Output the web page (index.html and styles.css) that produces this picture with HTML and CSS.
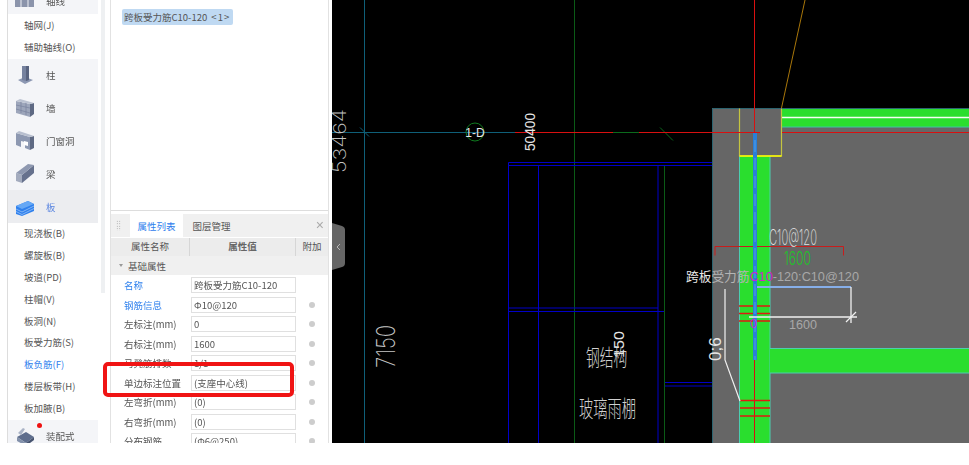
FILE: index.html
```html
<!DOCTYPE html>
<html lang="zh-CN">
<head>
<meta charset="utf-8">
<title>钢筋属性</title>
<link rel="stylesheet" href="styles.css">
</head>
<body>
<div class="app">
  <nav class="sidebar">
    <div class="cat cat-top">
      <svg class="ico" viewBox="0 0 20 20"><path d="M0 2h19v17H0z" fill="#8b94ab" transform="translate(0 -6)"/><path d="M6 -4v17M13 -4v17M0 4h19" stroke="#eef0f5" fill="none"/></svg>
      <span>轴线</span>
    </div>
    <div class="subs subs-first">
      <div class="sub">轴网(J)</div>
      <div class="sub">辅助轴线(O)</div>
    </div>
    <div class="cat">
      <svg class="ico" viewBox="0 0 20 20"><path d="M3 15l7-3 8 3-8 4z" fill="#8c97b2"/><path d="M7 1h7v14l-3 1-4-1z" fill="#76829f"/><path d="M11 1h3v14l-3 1z" fill="#58637f"/></svg>
      <span>柱</span>
    </div>
    <div class="cat">
      <svg class="ico" viewBox="0 0 20 20"><path d="M1 3l14 3v13L1 15z" fill="#9da6bb"/><path d="M15 6l4-1v11l-4 3z" fill="#5e6983"/><path d="M1 3l4-2 14 4-4 1z" fill="#bcc3d2"/><path d="M1 7l14 3M1 11l14 4M6 4v11M11 5v12" stroke="#78839d" stroke-width=".7" fill="none"/></svg>
      <span>墙</span>
    </div>
    <div class="cat">
      <svg class="ico" viewBox="0 0 20 20"><path d="M1 2l14 4v13l-5-2V11L6 10v6l-5-2z" fill="#8d98b1"/><path d="M15 6l4-1v12l-4 2z" fill="#5e6983"/><path d="M1 2l3-2 15 5-4 1z" fill="#b8bfcf"/><path d="M9 10l4 1v4l-4-1z" fill="#fff"/></svg>
      <span>门窗洞</span>
    </div>
    <div class="cat">
      <svg class="ico" viewBox="0 0 20 20"><path d="M1 9l6 2v8l-6-2z" fill="#a3abbe"/><path d="M7 11L19 1v8L7 19z" fill="#66718d"/><path d="M1 9L13 0l6 1L7 11z" fill="#8e98b0"/></svg>
      <span>梁</span>
    </div>
    <div class="cat cat-on">
      <svg class="ico" viewBox="0 0 20 20"><path d="M1 9l12-5 6 3v7L7 19l-6-2z" fill="#2f80ed"/><path d="M1 9l12-5 6 3L7 12z" fill="#66a8f5"/><path d="M1 12l6 3 12-6M1 14.500l6 3 12-6" stroke="#a8cdf8" stroke-width=".7" fill="none"/></svg>
      <span>板</span>
    </div>
    <div class="subs">
      <div class="sub">现浇板(B)</div>
      <div class="sub">螺旋板(B)</div>
      <div class="sub">坡道(PD)</div>
      <div class="sub">柱帽(V)</div>
      <div class="sub">板洞(N)</div>
      <div class="sub">板受力筋(S)</div>
      <div class="sub sub-on">板负筋(F)</div>
      <div class="sub">楼层板带(H)</div>
      <div class="sub">板加腋(B)</div>
    </div>
    <div class="cat">
      <svg class="ico" viewBox="0 0 20 20"><path d="M2 11l9-5 8 5-8 6z" fill="#5e6d8d"/><path d="M2 11l9 6v3l-9-5z" fill="#8391ab"/><path d="M11 17l8-6v3l-8 6z" fill="#46536f"/><path d="M3 7l5-5 2 1-4 6z" fill="#aab3c6"/></svg>
      <span>装配式</span>
      <i class="dot"></i>
    </div>
  </nav>

  <div class="scroll"><div class="thumb"></div></div>

  <section class="panel">
    <div class="picked"><span class="tag">跨板受力筋C10-120 <b class="count">&lt;1&gt;</b></span></div>
    <div class="tabs">
      <span class="grip"></span>
      <span class="tab tab-on">属性列表</span>
      <span class="tab">图层管理</span>
      <span class="close">×</span>
    </div>
    <div class="thead">
      <span class="c-name">属性名称</span>
      <span class="c-val">属性值</span>
      <span class="c-add">附加</span>
    </div>
    <div class="group"><span class="caret"></span>基础属性</div>
    <div class="row"><span class="c-label link">名称</span><span class="field">跨板受力筋C10-120</span></div>
    <div class="row"><span class="c-label link">钢筋信息</span><span class="field">Φ10@120</span><i class="radio"></i></div>
    <div class="row"><span class="c-label">左标注(mm)</span><span class="field">0</span><i class="radio"></i></div>
    <div class="row"><span class="c-label">右标注(mm)</span><span class="field">1600</span><i class="radio"></i></div>
    <div class="row"><span class="c-label">马凳筋排数</span><span class="field">1/1</span><i class="radio"></i></div>
    <div class="row"><span class="c-label">单边标注位置</span><span class="field">(支座中心线)</span><i class="radio"></i></div>
    <div class="row"><span class="c-label">左弯折(mm)</span><span class="field">(0)</span><i class="radio"></i></div>
    <div class="row"><span class="c-label">右弯折(mm)</span><span class="field">(0)</span><i class="radio"></i></div>
    <div class="row"><span class="c-label">分布钢筋</span><span class="field">(Φ6@250)</span><i class="radio"></i></div>
  </section>

  <main class="canvas">
    <svg class="cad" viewBox="332 0 637 443" xmlns="http://www.w3.org/2000/svg">
      <rect x="712" y="108" width="257" height="335" fill="#666"/>
      <path d="M712.500 443V108.500H969" fill="none" stroke="#2c6470"/>
      <!-- axes -->
      <path d="M364.500 0V443" class="l-teal"/>
      <path d="M332 132.500H515" class="l-teal"/>
      <path d="M360 127.500l9 9" class="l-teal"/>
      <path d="M574.500 0V443M664.500 166V443" class="l-green"/>
      <path d="M660 127.500l13 13" stroke="#0b6a1c" fill="none"/>
      <!-- blue frame -->
      <path d="M508.500 443V162.500H712M508.500 165.500H712M538.500 165.500V443M508.500 308H658M508.500 311.500H664M658 165.500V443M665 382.500H712M665 386H712" class="l-blue"/>
      <!-- green walls -->
      <rect x="782" y="109" width="187" height="18" fill="#2ade2e"/>
      <path d="M782 127H969" stroke="#3cc9a0"/>
      <path d="M782 117.500H969" stroke="#f4fff4" stroke-width="1.500"/>
      <rect x="740" y="156" width="30" height="287" fill="#2ade2e"/>
      <path d="M739.500 156V443M770 156V443" stroke="#4ccdb0"/>
      <rect x="770" y="349" width="199" height="24" fill="#2ade2e"/>
      <path d="M770 348.500H969M770 373H969" stroke="#4ccdb0"/>
      <!-- column -->
      <path d="M739.500 108.500V156H781.500V108.500" fill="none" stroke="#c4c440" stroke-width="1.200"/>
      <path d="M739.500 156H781.500" stroke="#ffff00" stroke-width="1.500"/>
      <path d="M805 0L781.500 108" stroke="#a8760a" fill="none"/>
      <!-- red axes -->
      <path d="M515 132.500H613M639 132.500H760M782 132.500H969" class="l-red"/>
      <path d="M613 132.500H639" stroke="#0b6a1c"/>
      <path d="M754.500 0V132M754.500 360V443" class="l-red"/>
      <path d="M739 306H770M739 313.500H770M739 321H770M740 400.500H770M740 408H770M740 416H770" stroke="#e01a12" stroke-width="1.500"/>
      <path d="M715 255.500V246.500H843.500V255.500" fill="none" stroke="#c81c1c"/>
      <!-- rebar -->
      <rect x="753" y="133" width="4" height="227" fill="#2a7fd8"/>
      <path d="M755 140V360" stroke="#67b0ee" stroke-dasharray="12 6" stroke-width=".7"/>
      <path d="M757 287H851" stroke="#86aee8" stroke-width="2"/>
      <path d="M851 287V323M749 317H857" stroke="#f0f0f0" stroke-width="1.300"/>
      <path d="M846 322l10-10" stroke="#f0f0f0" stroke-width="1.300"/>
      <path d="M725 289V360L740 401" fill="none" stroke="#f0f0f0" stroke-width="1.200"/>
      <!-- axis bubble -->
      <circle cx="475" cy="132" r="9" fill="none" stroke="#0f7a1f"/>
      <!-- text -->
      <text x="475" y="136.500" class="t t-axis">1-D</text>
      <text class="t t-rot" transform="translate(535 151) rotate(-90)" textLength="38" lengthAdjust="spacingAndGlyphs" font-size="15">50400</text>
      <text class="t-thin" transform="translate(346 173) rotate(-90)" textLength="64" lengthAdjust="spacingAndGlyphs" font-size="18">53464</text>
      <text class="t-thin" transform="translate(395 368) rotate(-90)" textLength="43" lengthAdjust="spacingAndGlyphs" font-size="26">7150</text>
      <text class="t t-cn" transform="translate(586 366) scale(.6 1)" font-size="23">钢结构</text>
      <text class="t t-cn" transform="translate(579 417) scale(.62 1)" font-size="23">玻璃雨棚</text>
      <text class="t t-rot" transform="translate(624 358) rotate(-90)" textLength="27" lengthAdjust="spacingAndGlyphs" font-size="14">150</text>
      <text class="t-thin t-bright" x="769" y="245" textLength="48" lengthAdjust="spacingAndGlyphs" font-size="21">C10@120</text>
      <text x="784" y="265" class="t-green" textLength="27" lengthAdjust="spacingAndGlyphs" font-size="19">1600</text>
      <text y="281" x="686" class="t-label" font-size="12.700">跨板<tspan fill="#b4b4b4">受力筋</tspan><tspan fill="#d020d0">C10</tspan><tspan fill="#a8a8a8">-120:C10@120</tspan></text>
      <text x="789" y="329" class="t-gray" textLength="28" lengthAdjust="spacingAndGlyphs" font-size="13">1600</text>
      <text x="750" y="328" class="t-mag" font-size="12">0</text>
      <text class="t t-rot" transform="translate(721 361) rotate(-90)" font-size="17">0;6</text>
      <!-- handle -->
      <path d="M332 223L342 226Q345 227 345 230V263Q345 266 342 267L332 270Z" fill="#666"/>
      <path d="M340 244l-3 3 3 3" fill="none" stroke="#b8b8b8"/>
    </svg>
  </main>

  <div class="mark"></div>
</div>
</body>
</html>
```
FILE: styles.css
```css
* { box-sizing: border-box; }
html, body { margin: 0; padding: 0; background: #fff; }
body { font-family: "Noto Sans CJK SC", "Liberation Sans", sans-serif; font-size: 9.5px; color: #555; }

.app { position: relative; display: flex; width: 969px; height: 443px; overflow: hidden; filter: blur(.4px); }

.sidebar { width: 91px; margin-left: 7px; border-left: 1px solid #ddd; flex: none; height: 443px; overflow: hidden; background: #fff; }
.cat { position: relative; display: flex; align-items: center; height: 32.900px; padding-left: 7px; background: #f4f5f8; flex: none; }
.cat span { margin-left: 11px; }
.cat-top { height: 14px; overflow: hidden; align-items: flex-start; }
.cat-top .ico { margin-top: -6px; }
.cat-top span { margin-top: -6px; }
.cat-on { background: #ecedf0; color: #5b86e0; }
.ico { width: 20px; height: 20px; flex: none; overflow: visible; }
.dot { position: absolute; left: 29px; top: 3px; width: 5px; height: 5px; border-radius: 50%; background: #ee1111; }

.subs { padding-top: 0; }
.subs-first { padding-top: 1px; }
.sub { height: 21.850px; line-height: 21.850px; padding-left: 16px; white-space: nowrap; }
.sub-on { color: #2f80ed; }

.scroll { width: 12px; flex: none; background: #fff; padding: 0 2px 0 3px; }
.thumb { width: 4px; height: 293px; background: #eef0f2; }

.panel { width: 219px; flex: none; background: #fff; overflow: hidden; border-left: 1px solid #e2e2e2; border-right: 1px solid #e2e2e2; }
.picked { height: 211px; padding: 9px 11px; border-bottom: 1px solid #ddd; margin-bottom: 3px; }
.tag { display: inline-block; height: 16px; line-height: 16px; padding: 0 3px 0 2px; background: #bfd9f2; border-radius: 2px; color: #555; white-space: nowrap; }
.count { font-weight: 400; margin-left: 2px; letter-spacing: 1px; }

.tabs { position: relative; display: flex; height: 23px; background: #f0f0f0; padding-left: 19px; align-items: stretch; }
.grip { position: absolute; left: 5px; top: 6px; width: 5px; height: 11px; background-image: radial-gradient(#999 .7px, transparent .8px); background-size: 2.500px 2.500px; }
.tab { display: flex; align-items: center; justify-content: center; color: #555; width: 53px; margin-right: 2px; white-space: nowrap; }
.tab-on { background: #fff; color: #2f80ed; }
.close { position: absolute; right: 4px; top: 4px; font-size: 14px; line-height: 14px; color: #aaa; font-family: "Liberation Sans", sans-serif; }

.thead { display: flex; height: 19px; background: #ececec; align-items: center; border-top: 1px solid #fff; }
.thead span { text-align: center; height: 100%; line-height: 17px; }
.c-name { width: 79px; border-right: 1px solid #d6d6d6; }
.c-val { width: 106px; border-right: 1px solid #d6d6d6; font-weight: 700; color: #666; }
.c-add { width: 32px; }

.group { display: flex; align-items: center; height: 19px; background: #f0f0f0; padding-left: 8px; }
.caret { width: 0; height: 0; border-left: 2.500px solid transparent; border-right: 2.500px solid transparent; border-top: 3px solid #999; margin-right: 5px; }

.row { display: flex; align-items: center; height: 19.500px; position: relative; top: .5px; }
.c-label { width: 80px; padding-left: 13px; white-space: nowrap; }
.link { color: #2f80ed; }
.field { width: 105px; height: 16px; line-height: 14px; border: 1px solid #e0e0e0; padding: 0 2px; white-space: nowrap; overflow: hidden; color: #555; background: #fff; }
.radio { width: 6px; height: 6px; border-radius: 50%; background: #cdcdcd; margin-left: 13px; }

.canvas { flex: 1; min-width: 0; margin-left: 3px; background: #000; height: 443px; border-left: 0; }
.cad { display: block; width: 637px; height: 443px; }

.l-teal { stroke: #0f5f78; fill: none; }
.l-green { stroke: #0b5a16; fill: none; }
.l-blue { stroke: #0000c8; fill: none; }
.l-red { stroke: #d81010; fill: none; }

.t { font-family: "Liberation Sans", "Noto Sans CJK SC", sans-serif; }
.t-axis { font-size: 12px; fill: #e6e6e6; text-anchor: middle; }
.t-rot { fill: #e6e6e6; }
.t-thin { fill: #c4c4c4; font-family: Inter, "Liberation Sans", sans-serif; font-weight: 200; }
.t-bright { fill: #e4e4e4; }
.t-cn { fill: #d0d0d0; font-family: "Noto Sans CJK SC", sans-serif; font-weight: 300; }
.t-green { fill: #22c02a; font-family: Inter, "Liberation Sans", sans-serif; font-weight: 300; }
.t-label { fill: #e8e8e8; font-family: "Liberation Sans", "Noto Sans CJK SC", sans-serif; }
.t-gray { fill: #a8a8a8; font-family: "Liberation Sans", sans-serif; }
.t-mag { fill: #d020d0; font-family: "Liberation Sans", sans-serif; }

.mark { position: absolute; left: 103px; top: 362px; width: 191px; height: 35px; border: 4px solid #f01414; border-radius: 5px; }
```
